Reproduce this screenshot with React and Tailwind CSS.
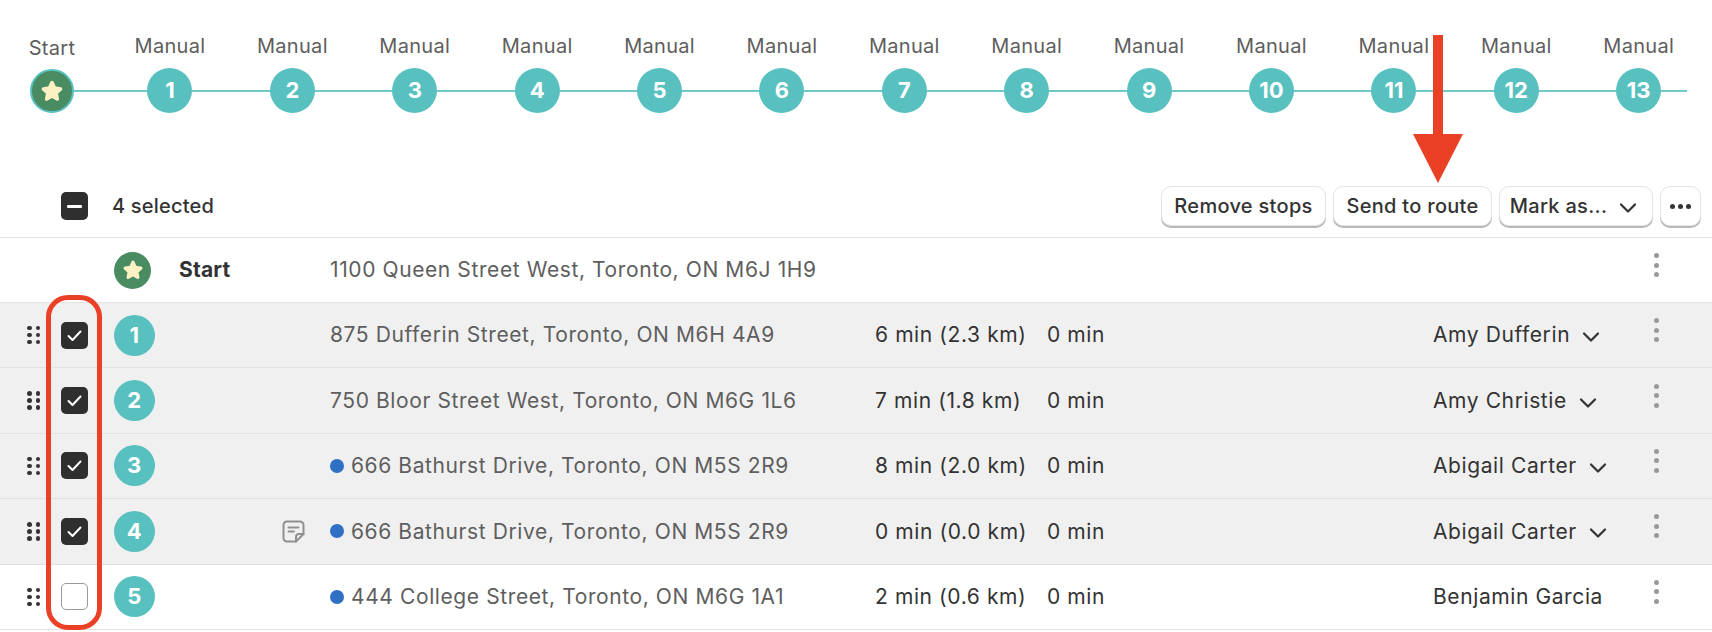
import { ChevronDown } from 'lucide-react'

const labels = [1, 2, 3, 4, 5, 6, 7, 8, 9, 10, 11, 12, 13]

const stops = [
  { n: 1, address: '875 Dufferin Street, Toronto, ON M6H 4A9', time: '6 min (2.3 km)', driver: 'Amy Dufferin', chevron: true, selected: true },
  { n: 2, address: '750 Bloor Street West, Toronto, ON M6G 1L6', time: '7 min (1.8 km)', driver: 'Amy Christie', chevron: true, selected: true },
  { n: 3, address: '666 Bathurst Drive, Toronto, ON M5S 2R9', time: '8 min (2.0 km)', driver: 'Abigail Carter', chevron: true, selected: true, dot: true },
  { n: 4, address: '666 Bathurst Drive, Toronto, ON M5S 2R9', time: '0 min (0.0 km)', driver: 'Abigail Carter', chevron: true, selected: true, dot: true, note: true },
  { n: 5, address: '444 College Street, Toronto, ON M6G 1A1', time: '2 min (0.6 km)', driver: 'Benjamin Garcia', dot: true },
]

function Star({ size }) {
  return (
    <svg width={size} height={size} viewBox="0 0 24 24" fill="#fbf1c2" stroke="#fbf1c2" strokeWidth="3.5" strokeLinejoin="round">
      <path d="M12 3.5l2.6 5.6 6 .8-4.4 4.2 1.1 6-5.3-3-5.3 3 1.1-6-4.4-4.2 6-.8z" />
    </svg>
  )
}

function Grip() {
  return (
    <div className="grid grid-cols-2 gap-x-[4px] gap-y-[2.5px] w-[13px]">
      {[0, 1, 2, 3, 4, 5].map(i => (
        <span key={i} className="w-[4.5px] h-[4.5px] rounded-full bg-[#333333]" />
      ))}
    </div>
  )
}

function Kebab() {
  return (
    <div className="flex flex-col gap-[4.5px] -mt-[10px]">
      {[0, 1, 2].map(i => (
        <span key={i} className="w-[5px] h-[5px] rounded-full bg-[#999999]" />
      ))}
    </div>
  )
}

function Checkbox({ checked }) {
  if (!checked) {
    return <div className="w-[27px] h-[27px] rounded-[5px] border border-[#999999] bg-white" />
  }
  return (
    <div className="w-[27px] h-[27px] rounded-[5px] bg-[#2f2f2f] flex items-center justify-center">
      <svg width="17" height="17" viewBox="0 0 17 17" fill="none" stroke="white" strokeWidth="2" strokeLinecap="round" strokeLinejoin="round">
        <path d="M2.5 9l4 4 8-8.5" />
      </svg>
    </div>
  )
}

function Note() {
  return (
    <svg width="23" height="23" viewBox="0 0 23 23" fill="none" stroke="#8f8f8f" strokeWidth="2" strokeLinejoin="round" strokeLinecap="round">
      <path d="M14 21.5H5a3.5 3.5 0 0 1-3.5-3.5V5A3.5 3.5 0 0 1 5 1.500h13A3.500 3.500 0 0 1 21.500 5v9z" />
      <path d="M14 21.500v-4.500a3 3 0 0 1 3-3h4.500" />
      <path d="M6.500 7.500h10M6.500 11.500h5.500" />
    </svg>
  )
}

function Button({ className, children }) {
  return (
    <button className={`h-[40px] rounded-[10px] bg-white border border-[#e4e4e4] shadow-[0_2px_0_#b9b9b9] text-[20px] tracking-[0.3px] font-medium text-[#333333] flex items-center justify-center ${className}`}>
      {children}
    </button>
  )
}

function StopRow({ stop }) {
  return (
    <div className={`h-[65.4px] flex items-center border-b border-[#e2e2e2] text-[21px] tracking-[0.6px] ${stop.selected ? 'bg-[#f0f0f0]' : 'bg-white'}`}>
      <div className="w-[61px] pl-[27px]"><Grip /></div>
      <div className="w-[53px]"><Checkbox checked={stop.selected} /></div>
      <div className="w-[168px]">
        <div className="w-[41px] h-[41px] rounded-full bg-[#58c1c0] flex items-center justify-center text-white text-[22px] font-bold">{stop.n}</div>
      </div>
      <div className="w-[48px]">{stop.note && <Note />}</div>
      <div className="w-[545px] flex items-center text-[#5e5e5e] whitespace-nowrap">
        {stop.dot && <span className="w-[14px] h-[14px] rounded-full bg-[#2f6fc4] mr-[7px]" />}
        {stop.address}
      </div>
      <div className="w-[172px] text-[#333333]">{stop.time}</div>
      <div className="w-[386px] text-[#333333]">0 min</div>
      <div className="w-[221px] flex items-center text-[#333333]">
        {stop.driver}
        {stop.chevron && <ChevronDown size={28} strokeWidth={1.9} className="ml-[7px] mt-[4px]" />}
      </div>
      <Kebab />
    </div>
  )
}

export default function App() {
  return (
    <div className="relative w-[1712px] h-[632px] bg-white overflow-hidden font-['Inter',sans-serif]">
      <div className="relative h-[176px] pt-[35px]">
        <div className="absolute left-[52px] top-[90px] w-[1635px] h-[2px] bg-[#6fc9c8]" />
        <div className="relative flex">
          <div className="ml-[30px] mr-[34.8px] w-[44px] flex flex-col items-center">
            <span className="text-[20px] tracking-[0.3px] leading-[22px] text-[#5e5e5e] mt-[2px] whitespace-nowrap">Start</span>
            <div className="mt-[10px] w-[44px] h-[44px] rounded-full bg-[#4a8c62] border-2 border-[#58c1c0] flex items-center justify-center">
              <Star size={24} />
            </div>
          </div>
          {labels.map(n => (
            <div key={n} className="w-[122.4px] flex flex-col items-center">
              <span className="text-[20px] tracking-[0.3px] leading-[22px] text-[#5e5e5e]">Manual</span>
              <div className="mt-[11px] w-[45px] h-[45px] rounded-full bg-[#58c1c0] flex items-center justify-center text-white text-[22px] font-bold">{n}</div>
            </div>
          ))}
        </div>
      </div>

      <div className="h-[62px] pb-[1px] flex items-center border-b border-[#e2e2e2]">
        <div className="ml-[61px] w-[51px]">
          <div className="w-[27px] h-[28px] rounded-[5px] bg-[#2f2f2f] flex items-center justify-center">
            <span className="w-[15px] h-[3px] rounded-[1px] bg-white" />
          </div>
        </div>
        <span className="text-[20px] tracking-[0.2px] font-medium text-[#333333]">4 selected</span>
        <div className="ml-auto mr-[11px] flex gap-[7px]">
          <Button className="w-[165px]">Remove stops</Button>
          <Button className="w-[159px]">Send to route</Button>
          <Button className="w-[154px] gap-[7px]">Mark as... <ChevronDown size={28} strokeWidth={1.9} className="mt-[3px]" /></Button>
          <Button className="w-[41px] gap-[3px]">
            <span className="w-[5px] h-[5px] rounded-full bg-[#333333]" />
            <span className="w-[5px] h-[5px] rounded-full bg-[#333333]" />
            <span className="w-[5px] h-[5px] rounded-full bg-[#333333]" />
          </Button>
        </div>
      </div>

      <div className="h-[65px] flex items-center border-b border-[#e2e2e2] text-[21px] tracking-[0.6px]">
        <div className="ml-[114px] w-[65px]">
          <div className="w-[37px] h-[37px] rounded-full bg-[#4a8c62] flex items-center justify-center">
            <Star size={22} />
          </div>
        </div>
        <div className="w-[151px] font-bold tracking-[0.2px] text-[#333333]">Start</div>
        <div className="w-[1324px] text-[#5e5e5e]">1100 Queen Street West, Toronto, ON M6J 1H9</div>
        <Kebab />
      </div>

      {stops.map(stop => <StopRow key={stop.n} stop={stop} />)}

      <div className="absolute left-[46px] top-[295px] w-[56px] h-[335px] rounded-[22px] border-[5px] border-[#ea4025]" />
      <svg className="absolute left-[1413px] top-[35px]" width="50" height="148" viewBox="0 0 50 148">
        <path d="M20 0h10v99h20L25 148 0 99h20z" fill="#ea4025" />
      </svg>
    </div>
  )
}
